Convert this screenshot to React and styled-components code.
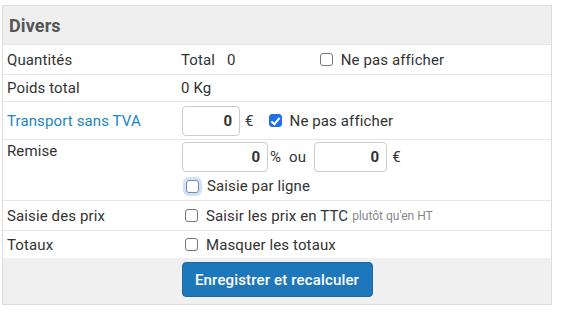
import React from "react";
import styled, { createGlobalStyle, css } from "styled-components";

const Global = createGlobalStyle`
  html, body { margin: 0; padding: 0; background: #fff; }
  body { font-family: Roboto, "Liberation Sans", sans-serif; font-size: 15px; color: #333; letter-spacing: 0.12px; }
  * { box-sizing: border-box; }
`;

const Page = styled.div`
  padding: 5px 0 0 2px;
`;

const Panel = styled.div`
  width: 550px;
  border: 1px solid #ddd;
  display: flex;
  flex-direction: column;
`;

const Header = styled.div`
  height: 38px;
  background: #efefef;
  display: flex;
  align-items: center;
  padding-left: 6px;
  font-size: 18px;
  font-weight: 700;
  color: #555;
`;

const Row = styled.div`
  display: grid;
  grid-template-columns: 178px 1fr;
  height: ${(p) => p.$h}px;
  border-top: 1px solid #e6e6e6;
  align-items: ${(p) => (p.$top ? "start" : "center")};
  line-height: 20px;
`;

const Label = styled.div`
  padding-left: 4px;
  padding-top: ${(p) => p.$pt || 0}px;
  color: ${(p) => (p.$link ? "#1a86c8" : "#333")};
`;

const Value = styled.div`
  display: flex;
  flex-direction: column;
  gap: ${(p) => p.$gap || 0}px;
  padding-top: ${(p) => p.$pt || 0}px;
`;

const Line = styled.div`
  display: flex;
  align-items: center;
`;

const Text = styled.span`
  margin-left: ${(p) => p.$ml || 0}px;
  margin-right: ${(p) => p.$mr || 0}px;
`;

const Muted = styled.span`
  font-size: 12px;
  color: #888;
  margin-left: 4px;
  letter-spacing: 0;
`;

const NumInput = styled.input`
  width: ${(p) => p.$w}px;
  height: 30px;
  margin-left: ${(p) => p.$ml || 0}px;
  border: 1px solid #ccc;
  border-radius: 4px;
  text-align: right;
  font-family: Roboto, "Liberation Sans", sans-serif;
  font-size: 15px;
  font-weight: 700;
  color: #333;
  padding: 0 7px;
  outline: none;
`;

const Check = styled.input.attrs({ type: "checkbox" })`
  appearance: none;
  -webkit-appearance: none;
  width: 13px;
  height: 13px;
  margin: 0 8px 0 ${(p) => p.$ml || 0}px;
  border: 1px solid #777;
  border-radius: 3px;
  background: #fff;
  flex: none;
  position: relative;
  ${(p) =>
    p.$focus &&
    css`
      box-shadow: 0 0 0 3px rgba(120, 170, 240, 0.35);
      border-color: #7a8aa0;
    `}
  &:checked {
    background: #1f6fe8;
    border-color: #1f6fe8;
  }
  &:checked::after {
    content: "";
    position: absolute;
    left: 3.5px;
    top: 0.5px;
    width: 3px;
    height: 7px;
    border: solid #fff;
    border-width: 0 2px 2px 0;
    transform: rotate(40deg);
  }
`;

const Footer = styled.div`
  height: 46px;
  background: #f0f0f0;
  display: flex;
  justify-content: center;
  align-items: flex-start;
  padding-top: 4px;
`;

const Button = styled.button`
  width: 191px;
  height: 35px;
  background: #1f77bb;
  color: #fff;
  border: 1px solid #1a6aa8;
  border-radius: 4px;
  font-family: Roboto, "Liberation Sans", sans-serif;
  font-size: 15px;
  font-weight: 500;
  letter-spacing: 0.15px;
  cursor: pointer;
`;

export default function App() {
  return (
    <Page>
      <Global />
      <Panel>
        <Header>Divers</Header>
        <Row $h={30}>
          <Label>Quantités</Label>
          <Line>
            <Text>Total</Text>
            <Text $ml={12}>0</Text>
            <Check $ml={84} />
            <Text>Ne pas afficher</Text>
          </Line>
        </Row>
        <Row $h={27}>
          <Label>Poids total</Label>
          <Line>
            <Text>0 Kg</Text>
          </Line>
        </Row>
        <Row $h={38}>
          <Label $link>Transport sans TVA</Label>
          <Line>
            <NumInput $w={58} $ml={1} defaultValue="0" />
            <Text $ml={5}>€</Text>
            <Check $ml={15} defaultChecked />
            <Text>Ne pas afficher</Text>
          </Line>
        </Row>
        <Row $h={61} $top>
          <Label $pt={1}>Remise</Label>
          <Value $pt={2} $gap={4}>
            <Line>
              <NumInput $w={86} $ml={1} defaultValue="0" />
              <Text $ml={2}>%</Text>
              <Text $ml={8}>ou</Text>
              <NumInput $w={73} $ml={8} defaultValue="0" />
              <Text $ml={5}>€</Text>
            </Line>
            <Line>
              <Check $ml={5} $focus />
              <Text>Saisie par ligne</Text>
            </Line>
          </Value>
        </Row>
        <Row $h={30}>
          <Label>Saisie des prix</Label>
          <Line>
            <Check $ml={4} />
            <Text>Saisir les prix en TTC</Text>
            <Muted>plutôt qu'en HT</Muted>
          </Line>
        </Row>
        <Row $h={28}>
          <Label>Totaux</Label>
          <Line>
            <Check $ml={4} />
            <Text>Masquer les totaux</Text>
          </Line>
        </Row>
        <Footer>
          <Button>Enregistrer et recalculer</Button>
        </Footer>
      </Panel>
    </Page>
  );
}
